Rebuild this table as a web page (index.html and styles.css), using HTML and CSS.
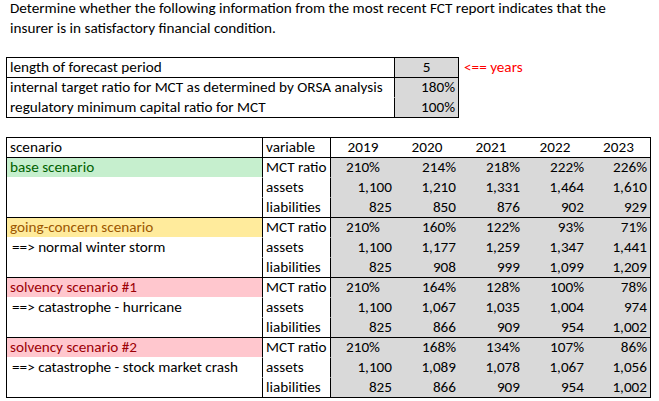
FILE: index.html
```html
<!DOCTYPE html>
<html lang="en">
<head>
<meta charset="utf-8">
<title>FCT report</title>
<link rel="stylesheet" href="styles.css">
</head>
<body>
<p class="intro">Determine whether the following information from the most recent FCT report indicates that the<br>insurer is in satisfactory financial condition.</p>

<div class="params">
  <table class="ptable">
    <colgroup><col class="c-label"><col class="c-val"></colgroup>
    <tbody>
      <tr class="top"><td class="label">length of forecast period</td><td class="val center">5</td></tr>
      <tr class="top"><td class="label">internal target ratio for MCT as determined by ORSA analysis</td><td class="val">180%</td></tr>
      <tr><td class="label">regulatory minimum capital ratio for MCT</td><td class="val">100%</td></tr>
    </tbody>
  </table>
  <span class="note">&lt;== years</span>
</div>

<table class="stable">
  <colgroup>
    <col class="c-scen"><col class="c-var"><col class="c-yr"><col class="c-yr"><col class="c-yr"><col class="c-yr"><col class="c-yr-last">
  </colgroup>
  <thead>
    <tr class="top"><th class="scen">scenario</th><th class="var">variable</th><th class="yr">2019</th><th class="yr">2020</th><th class="yr">2021</th><th class="yr">2022</th><th class="yr">2023</th></tr>
  </thead>
  <tbody>
    <tr class="top"><td class="scen good">base scenario</td><td class="var">MCT ratio</td><td class="num center">210%</td><td class="num">214%</td><td class="num">218%</td><td class="num">222%</td><td class="num">226%</td></tr>
    <tr><td class="scen"></td><td class="var">assets</td><td class="num">1,100</td><td class="num">1,210</td><td class="num">1,331</td><td class="num">1,464</td><td class="num">1,610</td></tr>
    <tr><td class="scen"></td><td class="var">liabilities</td><td class="num">825</td><td class="num">850</td><td class="num">876</td><td class="num">902</td><td class="num">929</td></tr>
  </tbody>
  <tbody>
    <tr class="top"><td class="scen neutral">going-concern scenario</td><td class="var">MCT ratio</td><td class="num center">210%</td><td class="num">160%</td><td class="num">122%</td><td class="num">93%</td><td class="num">71%</td></tr>
    <tr><td class="scen sub">==&gt; normal winter storm</td><td class="var">assets</td><td class="num">1,100</td><td class="num">1,177</td><td class="num">1,259</td><td class="num">1,347</td><td class="num">1,441</td></tr>
    <tr><td class="scen"></td><td class="var">liabilities</td><td class="num">825</td><td class="num">908</td><td class="num">999</td><td class="num">1,099</td><td class="num">1,209</td></tr>
  </tbody>
  <tbody>
    <tr class="top"><td class="scen bad">solvency scenario #1</td><td class="var">MCT ratio</td><td class="num center">210%</td><td class="num">164%</td><td class="num">128%</td><td class="num">100%</td><td class="num">78%</td></tr>
    <tr><td class="scen sub">==&gt; catastrophe - hurricane</td><td class="var">assets</td><td class="num">1,100</td><td class="num">1,067</td><td class="num">1,035</td><td class="num">1,004</td><td class="num">974</td></tr>
    <tr><td class="scen"></td><td class="var">liabilities</td><td class="num">825</td><td class="num">866</td><td class="num">909</td><td class="num">954</td><td class="num">1,002</td></tr>
  </tbody>
  <tbody>
    <tr class="top"><td class="scen bad">solvency scenario #2</td><td class="var">MCT ratio</td><td class="num center">210%</td><td class="num">168%</td><td class="num">134%</td><td class="num">107%</td><td class="num">86%</td></tr>
    <tr><td class="scen sub">==&gt; catastrophe - stock market crash</td><td class="var">assets</td><td class="num">1,100</td><td class="num">1,089</td><td class="num">1,078</td><td class="num">1,067</td><td class="num">1,056</td></tr>
    <tr><td class="scen"></td><td class="var">liabilities</td><td class="num">825</td><td class="num">866</td><td class="num">909</td><td class="num">954</td><td class="num">1,002</td></tr>
  </tbody>
</table>
</body>
</html>
```

FILE: styles.css
```css
* { box-sizing: border-box; }

body {
  margin: 0;
  background: #ffffff;
  color: #000000;
  font-family: Carlito, Lato, "Open Sans", sans-serif;
  font-size: 15.2px;
}

.intro {
  margin: -2px 0 0;
  padding: 0 0 0 10px;
  line-height: 20px;
}

.params {
  display: flex;
  align-items: flex-start;
  margin-top: 19px;
}

table {
  border-collapse: separate;
  border-spacing: 0;
  table-layout: fixed;
  border: 1px solid #000;
  border-top: 0;
}

td, th {
  height: 20px;
  padding: 0 3px;
  border-top: 1px solid transparent;
  line-height: 19px;
  vertical-align: bottom;
  font-weight: normal;
  text-align: left;
  white-space: nowrap;
  overflow: hidden;
}

tr.top > td, tr.top > th { border-top-color: #000; }

.ptable { width: 453px; margin-left: 6px; }
.c-label { width: 388px; }
.c-val { width: 63px; }
.label { border-right: 1px solid #000; }
.val { background: #d9d9d9; text-align: right; }

.note {
  color: #ff0000;
  margin-left: 5px;
  margin-top: 1px;
  line-height: 19px;
}

.stable { width: 645px; margin: 19px 0 0 6px; }
.c-scen { width: 256px; }
.c-var { width: 68px; }
.c-yr { width: 64px; }
.c-yr-last { width: 63px; }

.scen { border-right: 1px solid #000; }
.var { border-right: 1px solid #000; }
.yr { text-align: center; }
.num { background: #d9d9d9; text-align: right; }
.center { text-align: center; }

.sub { padding-left: 5px; }
.good { background: #c6efce; color: #006100; }
.neutral { background: #ffeb9c; color: #9c5700; }
.bad { background: #ffc7ce; color: #9c0006; }
```
